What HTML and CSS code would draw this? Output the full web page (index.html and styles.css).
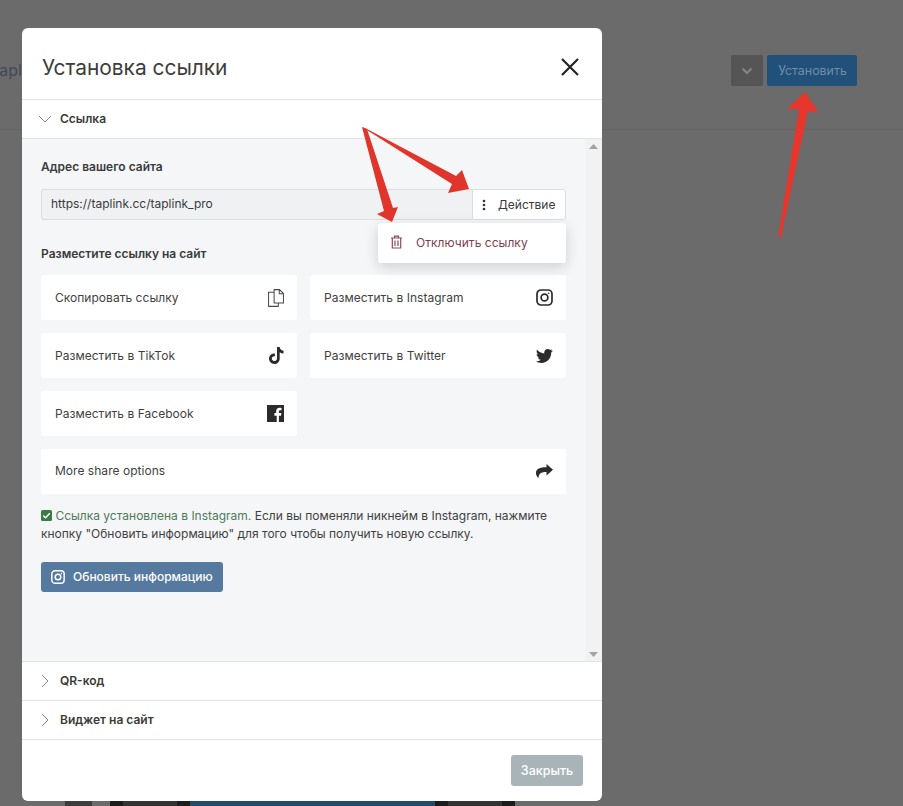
FILE: index.html
```html
<!DOCTYPE html>
<html lang="ru">
<head>
<meta charset="utf-8">
<title>Установка ссылки</title>
<link rel="stylesheet" href="styles.css">
</head>
<body>
<div class="page">
  <header class="topbar">
    <span class="topbar-link">taplink</span>
    <div class="topbar-actions">
      <span class="caret-btn"><svg width="14" height="14" viewBox="0 0 14 14"><path d="M2.500 4.500 7 9l4.500-4.500" fill="none" stroke="#858585" stroke-width="2.200"/></svg></span>
      <span class="install-btn">Установить</span>
    </div>
  </header>
  <div class="preview">
    <span class="pv pv-a"></span><span class="pv pv-b"></span><span class="pv pv-c"></span><span class="pv pv-d"></span><span class="pv pv-c"></span><span class="pv pv-e"></span><span class="pv pv-c"></span><span class="pv pv-d"></span><span class="pv pv-c"></span>
  </div>
</div>

<section class="modal">
  <div class="modal-head">
    <h1>Установка ссылки</h1>
    <svg class="close" width="18" height="18" viewBox="0 0 18 18"><path d="M1 1l16 16M17 1 1 17" stroke="#222" stroke-width="2.200" fill="none"/></svg>
  </div>

  <div class="acc">
    <svg class="chev" width="14" height="14" viewBox="0 0 14 14"><path d="M1 4l6 6 6-6" fill="none" stroke="#888" stroke-width="1"/></svg>
    <span>Ссылка</span>
  </div>

  <div class="body">
    <div class="content">
      <h2 class="label">Адрес вашего сайта</h2>
      <div class="url-row">
        <div class="url">https://taplink.cc/taplink_pro</div>
        <div class="action">
          <svg width="4" height="12" viewBox="0 0 4 12"><circle cx="2" cy="2" r="1.300" fill="#333"/><circle cx="2" cy="6" r="1.300" fill="#333"/><circle cx="2" cy="10" r="1.300" fill="#333"/></svg>
          <span>Действие</span>
        </div>
        <div class="menu">
          <svg width="13" height="14" viewBox="0 0 13 14" fill="none" stroke="#8b4a5c" stroke-width="1.200"><path d="M1 3h11M4.500 3V1.200h4V3M2.300 3v10h8.400V3M5 5.500V11M8 5.500V11"/></svg>
          <span>Отключить ссылку</span>
        </div>
      </div>

      <h2 class="label label-share">Разместите ссылку на сайт</h2>
      <div class="share-grid">
        <div class="tile"><span>Скопировать ссылку</span>
          <svg width="16" height="18" viewBox="0 0 17 19" fill="none" stroke="#4a4a4a" stroke-width="1.100"><path d="M6.500.6h5.700l4.200 4.200v10h-9.900zM12 .6v4.400h4.400M6.500 3.500H.6v14.900h10.400v-3.600"/></svg></div>
        <div class="tile"><span>Разместить в Instagram</span>
          <svg width="17" height="17" viewBox="0 0 17 17" fill="none" stroke="#2b2b2b" stroke-width="1.700"><rect x="1" y="1" width="15" height="15" rx="4"/><circle cx="8.500" cy="8.500" r="3.400"/><circle cx="12.700" cy="4.300" r=".8" fill="#2b2b2b" stroke="none"/></svg></div>
        <div class="tile"><span>Разместить в TikTok</span>
          <svg width="15" height="17" viewBox="0 0 15 17"><path fill="#2b2b2b" d="M8 0h2.700c.2 2 1.500 3.500 3.800 3.700v2.700c-1.400 0-2.700-.4-3.800-1.200v6.200c0 3.200-2.400 5.600-5.400 5.600S0 14.600 0 11.600c0-3.100 2.700-5.500 5.900-5.100v2.800c-1.600-.4-3.100.7-3.100 2.300 0 1.400 1.100 2.500 2.500 2.500S8 13 8 11.500z"/></svg></div>
        <div class="tile"><span>Разместить в Twitter</span>
          <svg width="17" height="14" viewBox="0 0 17 14"><path fill="#2b2b2b" d="M15.200 3.500v.5c0 4.600-3.500 9.900-9.900 9.900-2 0-3.800-.6-5.300-1.600h.8c1.600 0 3.100-.6 4.300-1.500-1.500 0-2.800-1-3.300-2.400.2 0 .4.100.7.100.3 0 .6 0 .9-.1C1.800 8 .6 6.600.6 4.900c.5.300 1 .4 1.600.4C1.300 4.700.6 3.700.6 2.500c0-.6.200-1.200.5-1.700C2.800 2.900 5.400 4.300 8.300 4.400 8.200 4.200 8.200 3.900 8.200 3.600 8.200 1.600 9.700 0 11.700 0c1 0 1.900.4 2.500 1.100.8-.2 1.500-.4 2.200-.8-.3.800-.8 1.500-1.500 1.900.7-.1 1.300-.3 2-.5-.5.700-1 1.300-1.700 1.800z"/></svg></div>
        <div class="tile"><span>Разместить в Facebook</span>
          <svg width="17" height="17" viewBox="0 0 17 17"><path fill="#2b2b2b" d="M0 0h17v17h-5.100v-6.300h2.100l.4-2.600h-2.500V6.500c0-.7.300-1.300 1.400-1.300h1.200V3c-.6-.1-1.300-.2-2-.2-2 0-3.300 1.200-3.300 3.400v1.900H7.400v2.600h2.300V17H0z"/></svg></div>
        <div class="tile tile-wide"><span>More share options</span>
          <svg width="17" height="14" viewBox="0 0 17 14"><path fill="#2b2b2b" d="M10.500 0 17 5.700l-6.500 5.700V8C6 8 3 8.800 2.400 14 .9 12.800 0 11 0 9c0-4.200 4-5.700 10.500-5.700z"/></svg></div>
      </div>

      <p class="note">
        <svg class="check" width="11" height="11" viewBox="0 0 11 11"><rect width="11" height="11" rx="1.500" fill="#3c7a45"/><path d="M2.300 5.600 4.600 7.800 8.800 3.300" fill="none" stroke="#fff" stroke-width="1.500"/></svg>
        <span class="note-ok">Ссылка установлена в Instagram.</span> Если вы поменяли никнейм в Instagram, нажмите кнопку "Обновить информацию" для того чтобы получить новую ссылку.
      </p>

      <div class="refresh">
        <svg width="14" height="14" viewBox="0 0 17 17" fill="none" stroke="#fff" stroke-width="1.800"><rect x="1" y="1" width="15" height="15" rx="4"/><circle cx="8.500" cy="8.500" r="3.400"/><circle cx="12.700" cy="4.300" r=".9" fill="#fff" stroke="none"/></svg>
        <span>Обновить информацию</span>
      </div>
    </div>
    <div class="scrollbar">
      <svg width="9" height="5" viewBox="0 0 9 5"><path d="M4.500 0 9 5H0z" fill="#a3a3a3"/></svg>
      <svg width="9" height="5" viewBox="0 0 9 5"><path d="M0 0h9L4.500 5z" fill="#a3a3a3"/></svg>
    </div>
  </div>

  <div class="acc acc-closed">
    <svg class="chev" width="14" height="14" viewBox="0 0 14 14"><path d="M4 1l6 6-6 6" fill="none" stroke="#888" stroke-width="1"/></svg>
    <span>QR-код</span>
  </div>
  <div class="acc acc-closed">
    <svg class="chev" width="14" height="14" viewBox="0 0 14 14"><path d="M4 1l6 6-6 6" fill="none" stroke="#888" stroke-width="1"/></svg>
    <span>Виджет на сайт</span>
  </div>

  <div class="modal-foot"><span class="close-btn">Закрыть</span></div>
</section>

<svg class="arrows" width="903" height="806" viewBox="0 0 903 806">
  <path fill="#e0352b" d="M362 127 367 129 456 176 462 170 469 189 448 193 452 184Z"/>
  <path fill="#e0352b" d="M362 127 367 129 393 208 398 207 392 222 377 214 384 211Z"/>
  <path fill="#e8362c" d="M778 237 799 109 787 109 805 92 819 113 808 111 781 237Z"/>
</svg>
</body>
</html>
```
FILE: styles.css
```css
* { box-sizing: border-box; }
html, body { margin: 0; height: 806px; overflow: hidden; }
body { background: #6b6b6b; font-family: Inter, "Liberation Sans", sans-serif; font-size: 12px; color: #3a3a3a; position: relative; }

.page { height: 806px; display: flex; flex-direction: column; }
.topbar { height: 130px; padding: 55px 46px 0 0; display: flex; justify-content: space-between; border-bottom: 1px solid #646464; }
.topbar-link { color: #3f4a5c; font-size: 16px; line-height: 31px; margin-left: -6px; white-space: nowrap; }
.topbar-actions { display: flex; gap: 4px; }
.caret-btn { width: 32px; height: 31px; background: #555; border-radius: 2px; display: flex; align-items: center; justify-content: center; }
.install-btn { width: 90px; height: 31px; padding-left: 1px; background: #215079; border-radius: 2px; color: #6f8da8; font-size: 12.400px; line-height: 31px; text-align: center; }
.preview { margin-top: auto; height: 9px; margin-left: 65px; width: 450px; display: flex; }
.pv { display: block; height: 100%; }
.pv-a { width: 27px; background: #3d3d3d; }
.pv-b { width: 18px; background: #6b6b6b; }
.pv-c { width: 13px; background: #1c1c1c; }
.pv-d { width: 54px; background: #333; }
.pv-e { width: 246px; background: #234b6b; }

.modal { position: absolute; left: 22px; top: 28px; width: 580px; height: 773px; background: #fff; border-radius: 6px; display: flex; flex-direction: column; overflow: hidden; }
.modal-head { height: 72px; padding: 8px 23px 0 20px; display: flex; align-items: center; justify-content: space-between; border-bottom: 1px solid #e3e3e3; flex: none; }
.modal-head h1 { margin: 0; font-size: 20.900px; font-weight: 400; color: #3d3d3d; }
.close { margin-bottom: 2px; }

.acc { height: 39px; flex: none; display: flex; align-items: center; gap: 8px; padding-left: 16px; border-bottom: 1px solid #e3e3e3; font-size: 12px; font-weight: 600; color: #3a3a3a; }
.acc span { position: relative; top: -1px; }

.body { height: 523px; flex: none; display: flex; background: #f5f6f8; border-bottom: 1px solid #e3e3e3; }
.content { width: 563px; padding: 20px 19px 0; flex: none; }
.scrollbar { flex: 1; background: #f2f2f2; padding: 5px 0 4px; display: flex; flex-direction: column; justify-content: space-between; align-items: center; }

.label { margin: 0; font-size: 12px; line-height: 15px; font-weight: 600; color: #3a3a3a; }
.url-row { position: relative; display: flex; height: 31px; margin-top: 15px; }
.url { flex: 1; background: #f0f1f2; border: 1px solid #dcdddf; border-right: 0; border-radius: 3px 0 0 3px; padding-left: 9px; line-height: 27px; font-size: 12px; color: #3a3a3a; }
.action { width: 94px; background: #fff; border: 1px solid #dcdddf; border-radius: 0 3px 3px 0; display: flex; align-items: center; gap: 12px; padding-left: 9px; font-size: 12px; color: #3a3a3a; }
.menu { position: absolute; right: 0; top: 34px; width: 188px; height: 40px; padding: 0 0 2px 12px; background: #fff; border-radius: 3px; box-shadow: 0 4px 14px rgba(0,0,0,.16); display: flex; align-items: center; gap: 13px; color: #7d3f50; font-size: 12px; letter-spacing: .03px; }
.label-share { margin-top: 26px; }

.share-grid { display: grid; grid-template-columns: 256px 256px; column-gap: 13px; row-gap: 13px; margin-top: 14px; }
.tile { height: 45px; background: #fff; border-radius: 3px; display: flex; align-items: center; justify-content: space-between; padding: 0 13px 0 14px; font-size: 12px; letter-spacing: .03px; color: #3f3f3f; }
.tile svg { flex: none; }
.tile-wide { grid-column: 1 / 3; padding-bottom: 2px; }

.note { margin: 13px 0 0; font-size: 12px; line-height: 18px; color: #3f3f3f; width: 525px; }
.check { vertical-align: -1px; }
.note-ok { color: #4f7a58; }

.refresh { margin-top: 19px; width: 182px; height: 30px; padding: 0 0 1px 10px; background: #56799f; border-radius: 3px; display: flex; align-items: center; gap: 8px; color: #fff; font-size: 12px; font-weight: 500; }

.modal-foot { flex: 1; display: flex; justify-content: flex-end; padding: 15px 19px 0 0; }
.close-btn { width: 72px; height: 31px; background: #a9b4b9; border-radius: 3px; color: #fff; font-size: 12.500px; font-weight: 500; line-height: 31px; text-align: center; }

.arrows { position: absolute; left: 0; top: 0; pointer-events: none; }
```
